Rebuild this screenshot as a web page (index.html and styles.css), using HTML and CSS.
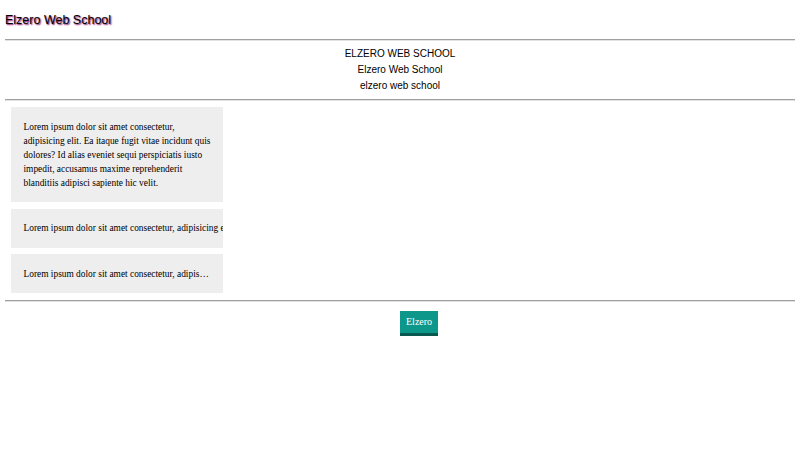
FILE: index.html
```html
<!DOCTYPE html>
<html>
<head>
<meta charset="utf-8">
<link rel="stylesheet" href="styles.css">
</head>
<body>
<div class="title">Elzero Web School</div>
<hr class="rule">
<div class="cases">
  <div class="upper">Elzero Web School</div>
  <div class="cap">elzero web school</div>
  <div class="lower">Elzero Web School</div>
</div>
<hr class="rule">
<div class="box">Lorem ipsum dolor sit amet consectetur, adipisicing elit. Ea itaque fugit vitae incidunt quis dolores? Id alias eveniet sequi perspiciatis iusto impedit, accusamus maxime reprehenderit blanditiis adipisci sapiente hic velit.</div>
<div class="box nowrap">Lorem ipsum dolor sit amet consectetur, adipisicing elit. Ea itaque fugit vitae incidunt quis dolores?</div>
<div class="box nowrap ellipsis">Lorem ipsum dolor sit amet consectetur, adipisicing elit. Ea itaque fugit vitae incidunt quis dolores?</div>
<hr class="rule">
<div class="btn-row"><span class="btn">Elzero</span></div>
</body>
</html>
```
FILE: styles.css
```css
html, body {
  background: #fff;
}
body {
  margin: 5px;
  font-family: "Liberation Serif", "Times New Roman", serif;
  color: #000;
}
.title {
  font-family: "Liberation Sans", Arial, sans-serif;
  font-size: 12.5px;
  line-height: 15px;
  padding: 8px 0 6px;
  color: #000;
  text-shadow: 1px 1px 1.5px #800060;
}
.rule {
  border: 0;
  border-top: 1px solid #a0a0a0;
  border-bottom: 1px solid #e2e2e2;
  height: 0;
  margin: 5px 0;
}
.cases {
  font-family: "Liberation Sans", Arial, sans-serif;
  font-size: 10px;
  line-height: 16px;
  text-align: center;
}
.upper { text-transform: uppercase; }
.cap { text-transform: capitalize; }
.lower { text-transform: lowercase; }
.box {
  width: 187px;
  margin: 6px 6px 6.5px;
  padding: 12.5px;
  background: #eee;
  font-size: 9.4px;
  line-height: 14px;
  color: #000;
}
.box + .box {
  margin-top: 6.5px;
}
.nowrap {
  white-space: nowrap;
  overflow: hidden;
}
.ellipsis {
  text-overflow: ellipsis;
}
.btn-row {
  padding-top: 4.5px;
}
.btn {
  display: inline-block;
  margin-left: 50%;
  background: #0d968a;
  color: #fff;
  font-size: 10px;
  line-height: 12px;
  padding: 5px 6px 5px;
  border-bottom: 3px solid #08594f;
}
```
